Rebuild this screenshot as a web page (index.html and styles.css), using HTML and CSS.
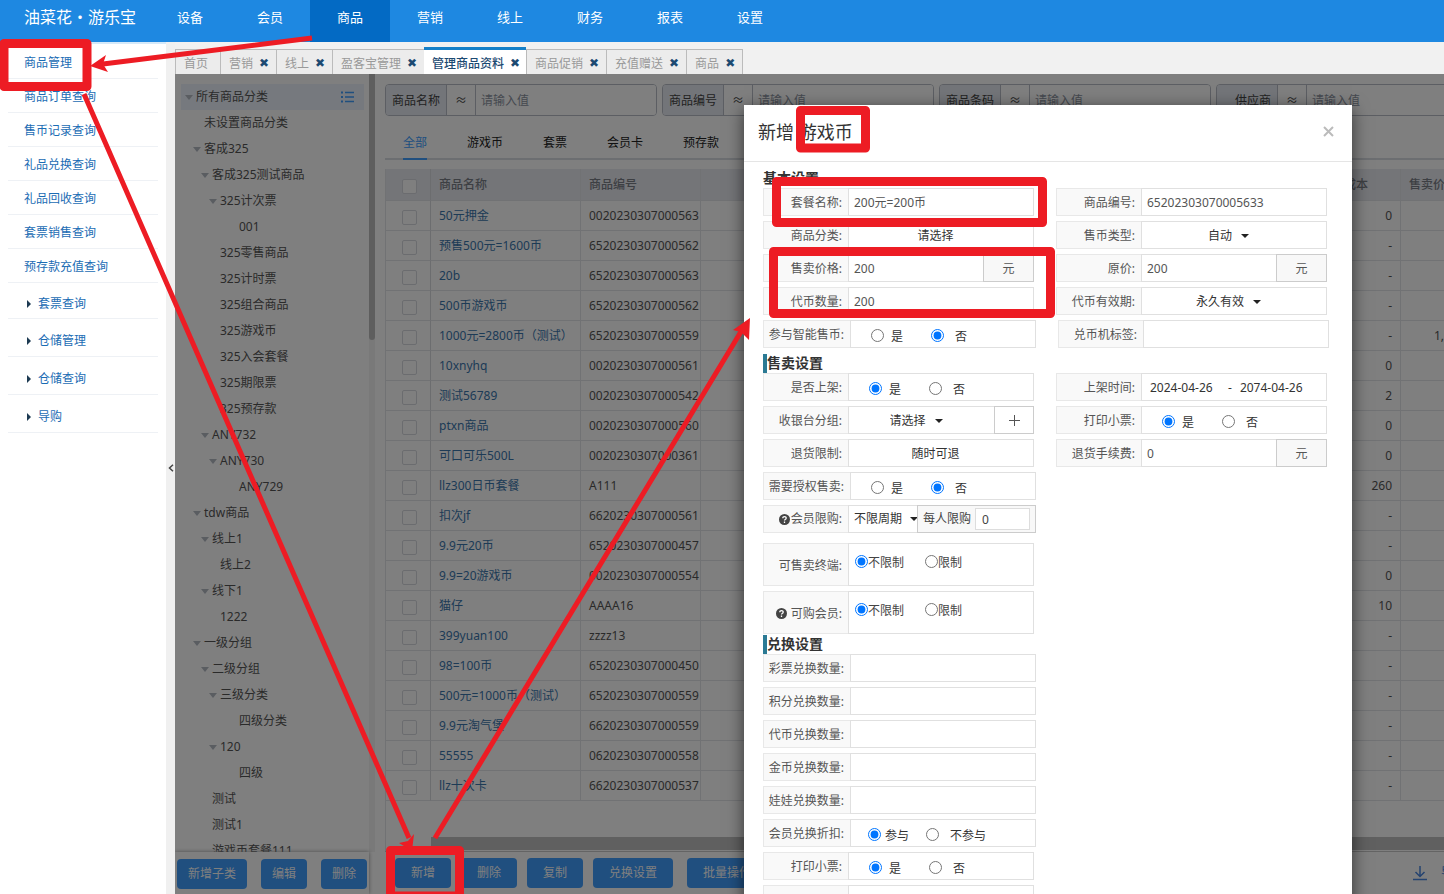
FILE: index.html
```html
<!DOCTYPE html>
<html lang="zh-CN">
<head>
<meta charset="utf-8">
<title>管理商品资料</title>
<link rel="stylesheet" href="styles.css">
</head>
<body>
<header class="topbar">
  <div class="logo">油菜花・游乐宝</div>
  <nav class="topnav">
    <a href="#">设备</a><a href="#">会员</a><a href="#" class="active">商品</a><a href="#">营销</a><a href="#">线上</a><a href="#">财务</a><a href="#">报表</a><a href="#">设置</a>
  </nav>
</header>
<div class="page">
  <aside class="sidebar">
    <a href="#">商品管理</a>
    <a href="#">商品订单查询</a>
    <a href="#">售币记录查询</a>
    <a href="#">礼品兑换查询</a>
    <a href="#">礼品回收查询</a>
    <a href="#">套票销售查询</a>
    <a href="#">预存款充值查询</a>
    <a href="#" class="group first">套票查询</a>
    <a href="#" class="group">仓储管理</a>
    <a href="#" class="group">仓储查询</a>
    <a href="#" class="group">导购</a>
  </aside>
  <button class="collapse" aria-label="收起菜单"><svg width="6" height="8" viewBox="0 0 6 8"><path d="M5 .8 1.5 4 5 7.2" fill="none" stroke="#444" stroke-width="1.5"/></svg></button>
  <main class="workspace">
    <div class="tabs">
      <a href="#" class="home">首页</a>
      <a href="#">营销<b>✖</b></a>
      <a href="#">线上<b>✖</b></a>
      <a href="#">盈客宝管理<b>✖</b></a>
      <a href="#" class="active">管理商品资料<b>✖</b></a>
      <a href="#">商品促销<b>✖</b></a>
      <a href="#">充值赠送<b>✖</b></a>
      <a href="#" class="last">商品<b>✖</b></a>
    </div>
    <div class="frame">
      <section class="category">
        <div class="tree-wrap">
          <ul class="tree">
            <li class="l0 open root">所有商品分类<svg width="14" height="12" viewBox="0 0 14 12"><path d="M4 1.5h9M4 6h9M4 10.500h9" stroke="#409eff" stroke-width="1.500"/><path d="M0 1.500h2M0 6h2M0 10.500h2" stroke="#409eff" stroke-width="2"/></svg></li>
            <li class="l1">未设置商品分类</li>
            <li class="l1 open">客成325</li>
            <li class="l2 open">客成325测试商品</li>
            <li class="l3 open">325计次票</li>
            <li class="l4">001</li>
            <li class="l3">325零售商品</li>
            <li class="l3">325计时票</li>
            <li class="l3">325组合商品</li>
            <li class="l3">325游戏币</li>
            <li class="l3">325入会套餐</li>
            <li class="l3">325期限票</li>
            <li class="l3">325预存款</li>
            <li class="l2 open">ANY732</li>
            <li class="l3 open">ANY730</li>
            <li class="l4">ANY729</li>
            <li class="l1 open">tdw商品</li>
            <li class="l2 open">线上1</li>
            <li class="l3">线上2</li>
            <li class="l2 open">线下1</li>
            <li class="l3">1222</li>
            <li class="l1 open">一级分组</li>
            <li class="l2 open">二级分组</li>
            <li class="l3 open">三级分类</li>
            <li class="l4">四级分类</li>
            <li class="l3 open">120</li>
            <li class="l4">四级</li>
            <li class="l2">测试</li>
            <li class="l2">测试1</li>
            <li class="l2">游戏币套餐111</li>
          </ul>
          <div class="track"><div class="thumb"></div></div>
        </div>
        <div class="category-actions">
          <button class="btn">新增子类</button><button class="btn">编辑</button><button class="btn">删除</button>
        </div>
      </section>
      <section class="goods">
        <div class="filters">
          <div class="filter"><label for="f1">商品名称</label><span>≈</span><input id="f1" placeholder="请输入值"></div>
          <div class="filter"><label for="f2">商品编号</label><span>≈</span><input id="f2" placeholder="请输入值"></div>
          <div class="filter"><label for="f3">商品条码</label><span>≈</span><input id="f3" placeholder="请输入值"></div>
          <div class="filter"><label for="f4">供应商</label><span>≈</span><input id="f4" placeholder="请输入值"></div>
        </div>
        <nav class="types"><a href="#" class="active">全部</a><a href="#">游戏币</a><a href="#">套票</a><a href="#">会员卡</a><a href="#">预存款</a></nav>
        <div class="grid-wrap">
          <table class="grid">
            <colgroup><col class="c-check"><col class="c-name"><col class="c-code"><col><col class="c-cost"><col class="c-price"></colgroup>
            <thead><tr><th class="pick"><input type="checkbox" aria-label="全选"></th><th>商品名称</th><th>商品编号</th><th></th><th class="cost">成本</th><th>售卖价格</th></tr></thead>
            <tbody>
              <tr><td class="pick"><input type="checkbox" aria-label="选择"></td><td><a href="#">50元押金</a></td><td>0020230307000563</td><td></td><td class="num">0</td><td></td></tr>
              <tr><td class="pick"><input type="checkbox" aria-label="选择"></td><td><a href="#">预售500元=1600币</a></td><td>6520230307000562</td><td></td><td class="num">-</td><td></td></tr>
              <tr><td class="pick"><input type="checkbox" aria-label="选择"></td><td><a href="#">20b</a></td><td>6520230307000563</td><td></td><td class="num">-</td><td></td></tr>
              <tr><td class="pick"><input type="checkbox" aria-label="选择"></td><td><a href="#">500币游戏币</a></td><td>6520230307000562</td><td></td><td class="num">-</td><td></td></tr>
              <tr><td class="pick"><input type="checkbox" aria-label="选择"></td><td><a href="#">1000元=2800币（测试）</a></td><td>6520230307000559</td><td></td><td class="num">-</td><td class="num">1,</td></tr>
              <tr><td class="pick"><input type="checkbox" aria-label="选择"></td><td><a href="#">10xnyhq</a></td><td>0020230307000561</td><td></td><td class="num">0</td><td></td></tr>
              <tr><td class="pick"><input type="checkbox" aria-label="选择"></td><td><a href="#">测试56789</a></td><td>0020230307000542</td><td></td><td class="num">2</td><td></td></tr>
              <tr><td class="pick"><input type="checkbox" aria-label="选择"></td><td><a href="#">ptxn商品</a></td><td>0020230307000560</td><td></td><td class="num">0</td><td></td></tr>
              <tr><td class="pick"><input type="checkbox" aria-label="选择"></td><td><a href="#">可口可乐500L</a></td><td>0020230307000361</td><td></td><td class="num">0</td><td></td></tr>
              <tr><td class="pick"><input type="checkbox" aria-label="选择"></td><td><a href="#">llz300日币套餐</a></td><td>A111</td><td></td><td class="num">260</td><td></td></tr>
              <tr><td class="pick"><input type="checkbox" aria-label="选择"></td><td><a href="#">扣次jf</a></td><td>6620230307000561</td><td></td><td class="num">-</td><td></td></tr>
              <tr><td class="pick"><input type="checkbox" aria-label="选择"></td><td><a href="#">9.9元20币</a></td><td>6520230307000457</td><td></td><td class="num">-</td><td></td></tr>
              <tr><td class="pick"><input type="checkbox" aria-label="选择"></td><td><a href="#">9.9=20游戏币</a></td><td>0020230307000554</td><td></td><td class="num">0</td><td></td></tr>
              <tr><td class="pick"><input type="checkbox" aria-label="选择"></td><td><a href="#">猫仔</a></td><td>AAAA16</td><td></td><td class="num">10</td><td></td></tr>
              <tr><td class="pick"><input type="checkbox" aria-label="选择"></td><td><a href="#">399yuan100</a></td><td>zzzz13</td><td></td><td class="num">-</td><td></td></tr>
              <tr><td class="pick"><input type="checkbox" aria-label="选择"></td><td><a href="#">98=100币</a></td><td>6520230307000450</td><td></td><td class="num">-</td><td></td></tr>
              <tr><td class="pick"><input type="checkbox" aria-label="选择"></td><td><a href="#">500元=1000币（测试）</a></td><td>6520230307000559</td><td></td><td class="num">-</td><td></td></tr>
              <tr><td class="pick"><input type="checkbox" aria-label="选择"></td><td><a href="#">9.9元淘气堡</a></td><td>6620230307000559</td><td></td><td class="num">-</td><td></td></tr>
              <tr><td class="pick"><input type="checkbox" aria-label="选择"></td><td><a href="#">55555</a></td><td>0620230307000558</td><td></td><td class="num">-</td><td></td></tr>
              <tr><td class="pick"><input type="checkbox" aria-label="选择"></td><td><a href="#">llz十次卡</a></td><td>6620230307000537</td><td></td><td class="num">-</td><td></td></tr>
            </tbody>
          </table>
          <div class="hscroll"></div>
        </div>
        <div class="goods-actions">
          <button class="btn">新增</button><button class="btn">删除</button><button class="btn">复制</button><button class="btn">兑换设置</button><button class="btn batch">批量操作</button>
          <a href="#" class="export"><svg width="14" height="16" viewBox="0 0 14 16"><path d="M7 1v10M2.500 7 7 11.500 11.500 7M0 14.500h14" fill="none" stroke="#4a86e0" stroke-width="1.500"/></svg>导</a>
        </div>
      </section>
      <div class="overlay">
        <form class="modal">
          <div class="modal-head"><h1>新增 游戏币</h1><button type="button" class="close" aria-label="关闭"><svg width="11" height="11" viewBox="0 0 11 11"><path d="M1 1l9 9M10 1l-9 9" stroke="#bbb" stroke-width="2"/></svg></button></div>
          <div class="modal-body">
            <h2 class="plain">基本设置</h2>
            <div class="row">
              <div class="field"><label for="m1">套餐名称:</label><input id="m1" value="200元=200币"></div>
              <div class="field"><label for="m2">商品编号:</label><input id="m2" value="65202303070005633"></div>
            </div>
            <div class="row">
              <div class="field"><span class="cap">商品分类:</span><button type="button" class="box center">请选择</button></div>
              <div class="field"><label for="m3">售币类型:</label><div class="box center"><select id="m3"><option>自动</option></select><i class="caret"></i></div></div>
            </div>
            <div class="row">
              <div class="field"><label for="m4">售卖价格:</label><input id="m4" value="200"><span class="unit">元</span></div>
              <div class="field"><label for="m5">原价:</label><input id="m5" value="200"><span class="unit">元</span></div>
            </div>
            <div class="row">
              <div class="field"><label for="m6">代币数量:</label><input id="m6" value="200"></div>
              <div class="field"><label for="m7">代币有效期:</label><div class="box center"><select id="m7"><option>永久有效</option></select><i class="caret"></i></div></div>
            </div>
            <div class="row">
              <div class="field long"><span class="cap">参与智能售币:</span><div class="box radios"><label><input type="radio" name="r1">是</label><label><input type="radio" name="r1" checked>否</label></div></div>
              <div class="field"><label for="m8">兑币机标签:</label><input id="m8"></div>
            </div>
            <h2>售卖设置</h2>
            <div class="row">
              <div class="field"><span class="cap">是否上架:</span><div class="box radios"><label><input type="radio" name="r2" checked>是</label><label><input type="radio" name="r2">否</label></div></div>
              <div class="field"><label for="m9">上架时间:</label><div class="box dates"><input id="m9" value="2024-04-26"><span>-</span><input aria-label="结束时间" value="2074-04-26"></div></div>
            </div>
            <div class="row">
              <div class="field"><label for="m10">收银台分组:</label><div class="box center"><select id="m10"><option>请选择</option></select><i class="caret"></i></div><button type="button" class="plus" aria-label="添加"><svg width="11" height="11" viewBox="0 0 11 11"><path d="M5.500 0v11M0 5.500h11" stroke="#555"/></svg></button></div>
              <div class="field"><span class="cap">打印小票:</span><div class="box radios"><label><input type="radio" name="r3" checked>是</label><label><input type="radio" name="r3">否</label></div></div>
            </div>
            <div class="row">
              <div class="field"><span class="cap">退货限制:</span><button type="button" class="box center">随时可退</button></div>
              <div class="field"><label for="m11">退货手续费:</label><input id="m11" value="0"><span class="unit">元</span></div>
            </div>
            <div class="row">
              <div class="field long"><span class="cap">需要授权售卖:</span><div class="box radios"><label><input type="radio" name="r4">是</label><label><input type="radio" name="r4" checked>否</label></div></div>
            </div>
            <div class="row">
              <div class="field long"><label for="m12" class="cap short"><svg class="help" width="11" height="11" viewBox="0 0 11 11"><circle cx="5.500" cy="5.500" r="5.500" fill="#444"/><path d="M3.800 4.300q0-1.700 1.700-1.700t1.700 1.500q0 .9-1 1.400-.7.400-.7 1.100M5.500 7.600v1.300" fill="none" stroke="#fff" stroke-width="1.300"/></svg>会员限购:</label><div class="box period"><select id="m12"><option>不限周期</option></select><i class="caret"></i></div><div class="each"><label for="m13">每人限购</label><input id="m13" value="0"></div></div>
            </div>
            <div class="row tall gap">
              <div class="field"><span class="cap">可售卖终端:</span><div class="box limits"><label><input type="radio" name="r5" checked>不限制</label><label><input type="radio" name="r5">限制</label></div></div>
            </div>
            <div class="row tall">
              <div class="field"><span class="cap"><svg class="help spaced" width="11" height="11" viewBox="0 0 11 11"><circle cx="5.500" cy="5.500" r="5.500" fill="#444"/><path d="M3.800 4.300q0-1.700 1.700-1.700t1.700 1.500q0 .9-1 1.400-.7.400-.7 1.100M5.500 7.600v1.300" fill="none" stroke="#fff" stroke-width="1.300"/></svg>可购会员:</span><div class="box limits"><label><input type="radio" name="r6" checked>不限制</label><label><input type="radio" name="r6">限制</label></div></div>
            </div>
            <h2 class="tight">兑换设置</h2>
            <div class="row"><div class="field long"><label for="m14">彩票兑换数量:</label><input id="m14"></div></div>
            <div class="row"><div class="field long"><label for="m15">积分兑换数量:</label><input id="m15"></div></div>
            <div class="row"><div class="field long"><label for="m16">代币兑换数量:</label><input id="m16"></div></div>
            <div class="row"><div class="field long"><label for="m17">金币兑换数量:</label><input id="m17"></div></div>
            <div class="row"><div class="field long"><label for="m18">娃娃兑换数量:</label><input id="m18"></div></div>
            <div class="row"><div class="field long"><span class="cap">会员兑换折扣:</span><div class="box radios wide"><label><input type="radio" name="r7" checked>参与</label><label><input type="radio" name="r7">不参与</label></div></div></div>
            <div class="row"><div class="field"><span class="cap">打印小票:</span><div class="box radios"><label><input type="radio" name="r8" checked>是</label><label><input type="radio" name="r8">否</label></div></div></div>
            <div class="row"><div class="field"><span class="cap"></span><div class="box"></div></div></div>
          </div>
        </form>
      </div>
    </div>
  </main>
</div>
<svg class="marks" width="1444" height="894" viewBox="0 0 1444 894" aria-hidden="true">
  <g fill="none" stroke="#ed1c24" stroke-width="9" stroke-linejoin="round">
    <rect x="4" y="43.500" width="83" height="43"/>
    <rect x="800.500" y="110.500" width="65" height="37.500"/>
    <rect x="776.500" y="181.500" width="266" height="41"/>
    <rect x="773.500" y="251.500" width="277" height="62"/>
    <rect x="390.500" y="850.500" width="69" height="45.500"/>
  </g>
  <g stroke="#ed1c24" stroke-width="5" stroke-linecap="butt">
    <path d="M312 38 103 64M84 94 409 838M435 838 742 330"/>
  </g>
  <g fill="#ed1c24">
    <path d="M90 66 106 55 103 64 108 72z"/>
    <path d="M412 851 399 843 408 841 414 834z"/>
    <path d="M750 318 733 330 741 332 749 340z"/>
  </g>
</svg>
</body>
</html>
```
FILE: styles.css
```css
* { box-sizing: border-box; }
body {
  margin: 0;
  height: 100vh;
  display: flex;
  flex-direction: column;
  overflow: hidden;
  position: relative;
  background: #fff;
  color: #444;
  font: 12px/18px "Noto Sans", "Noto Sans CJK SC", sans-serif;
}
a { color: inherit; text-decoration: none; }
button, input, select { font: inherit; color: inherit; margin: 0; }
svg { display: block; flex: none; }

.topbar { display: flex; height: 42px; flex: none; background: #1e88e1; color: #fff; }
.logo { width: 150px; padding-left: 24px; font-size: 16px; line-height: 34px; white-space: nowrap; }
.topnav { display: flex; }
.topnav a { width: 80px; text-align: center; font-size: 13px; line-height: 34px; }
.topnav a.active { background: #036ac4; }

.page { flex: 1; min-height: 0; display: flex; }
.sidebar { width: 166px; flex: none; padding: 1px 8px 0; border-top: 2px solid #d5e9f9; color: #1b6cb4; }
.sidebar a { display: flex; align-items: center; height: 34px; padding: 2px 0 0 16px; border-bottom: 1px solid #eef1f5; }
.sidebar a.group { height: 38px; padding: 6px 0 0 19px; gap: 7px; }
.sidebar a.first { height: 36px; }
.sidebar a.group::before { content: ""; border: 4px solid transparent; border-left-color: #1d3a52; border-right: 0; }
.collapse { width: 9px; flex: none; padding: 0; border: 0; background: #f0f0f0; display: flex; align-items: center; justify-content: center; }

.workspace { flex: 1; min-width: 0; display: flex; flex-direction: column; }
.tabs { height: 32px; flex: none; display: flex; align-items: flex-end; background: #f1f1f1; color: #999; }
.tabs a { height: 25px; display: flex; gap: 6px; padding: 0 8px; line-height: 27px; border: 1px solid #bbb; border-width: 1px 0 0 1px; background: #ececec; }
.tabs a.home { padding-right: 12px; }
.tabs a.last { border-right-width: 1px; }
.tabs a.active { height: 27px; padding: 0 7px 0 8px; border: 0; border-top: 3px solid #1580c8; background: #fff; color: #1c4a72; line-height: 27px; font-weight: 500; }
.tabs b { width: 9px; color: #1c4a72; font: 12px/26px "DejaVu Sans", sans-serif; }

.frame { flex: 1; min-height: 0; display: flex; position: relative; overflow: hidden; }
.category { width: 200px; flex: none; display: flex; flex-direction: column; color: #555; }
.tree-wrap { flex: 1; min-height: 0; display: flex; overflow: hidden; }
.tree { flex: 1; margin: 0; padding: 10px 5px 0 6px; list-style: none; }
.tree li { display: flex; align-items: center; height: 26px; white-space: nowrap; }
.tree li.open::before { content: ""; margin: 0 3px 0 -11px; border: 4px solid transparent; border-top: 5px solid #b4bac3; border-bottom: 0; }
.tree .l0 { padding-left: 15px; }
.tree .l1 { padding-left: 23px; }
.tree .l2 { padding-left: 31px; }
.tree .l3 { padding-left: 39px; }
.tree .l4 { padding-left: 58px; }
.tree .root { background: #edf3fc; padding-right: 9px; }
.tree .root svg { margin-left: auto; }
.track { width: 6px; background: #f2f2f2; }
.thumb { height: 266px; background: #bdbdbd; border-radius: 0 0 3px 3px; }
.category-actions { height: 42px; flex: none; display: flex; gap: 14px; padding: 7px 2px; margin-right: 6px; box-shadow: 0 0 4px #999; }
.btn { height: 30px; padding: 0 11px; border: 0; border-radius: 4px; background: #409eff; color: #fff; white-space: nowrap; }

.goods { flex: 1; min-width: 0; display: flex; flex-direction: column; padding: 10px 0 0 10px; }
.filters { display: flex; gap: 5px; }
.filter { width: 272px; flex: none; height: 32px; display: flex; border: 1px solid #b8bdc6; border-radius: 4px; overflow: hidden; line-height: 32px; }
.filter label { width: 61px; padding-right: 6px; text-align: right; background: #e6eaf2; border-right: 1px solid #b8bdc6; }
.filter span { width: 29px; text-align: center; border-right: 1px solid #b8bdc6; }
.filter input { flex: 1; min-width: 0; border: 0; padding: 2px 5px 0; background: #fff; }
.filter input::placeholder { color: #8c93a0; }
.types { display: flex; gap: 40px; margin-top: 12px; padding-left: 18px; height: 32px; border-bottom: 2px solid #d9dce3; color: #222; line-height: 30px; }
.types a { height: 32px; }
.types a.active { color: #409eff; border-bottom: 2px solid #409eff; }
.grid-wrap { flex: 1; min-height: 0; margin-top: 9px; display: flex; flex-direction: column; border-left: 1px solid #e2e4e9; }
.grid { width: 100%; table-layout: fixed; border-collapse: separate; border-spacing: 0; color: #555; }
.c-check { width: 45px; }
.c-name { width: 150px; }
.c-code { width: 120px; }
.c-cost { width: 120px; }
.c-price { width: 43px; }
.grid th, .grid td { height: 30px; padding: 0 0 0 8px; text-align: left; font-weight: 400; white-space: nowrap; overflow: hidden; border: 0 solid #e3e5e9; border-bottom-width: 1px; border-right-width: 1px; }
.grid th { height: 32px; background: #e8eaf1; color: #7a7e87; font-weight: 500; }
.grid th:nth-child(4), .grid td:nth-child(4) { border-right-width: 0; }
.grid th:last-child, .grid td:last-child { border-right-width: 0; }
.grid .cost { text-align: right; padding-right: 32px; }
.grid .num { text-align: right; padding-right: 8px; }
.grid .num:last-child { padding: 0; }
.grid a { color: #3a76ad; }
.grid .pick { padding: 3px 0 0 16px; border-right-color: #d8dadf; }
.pick input { display: block; appearance: none; width: 15px; height: 15px; border: 1px solid #d6d9df; border-radius: 2px; background: #fff; }
.hscroll { height: 13px; flex: none; margin: auto 0 1px 45px; background: #c0c0c0; }
.goods-actions { height: 43px; flex: none; display: flex; align-items: flex-start; gap: 10px; padding: 6px 0 0 10px; border-top: 1px solid #c8c8c8; }
.goods-actions .btn { padding: 0 16px; }
.goods-actions .batch { margin-left: 4px; }
.export { margin-left: auto; display: flex; align-items: center; gap: 14px; width: 31px; height: 30px; overflow: hidden; color: #4a86e0; }

.overlay { position: absolute; inset: 0; overflow: hidden; background: rgba(0, 0, 0, .5); display: flex; justify-content: flex-end; align-items: flex-start; padding: 31px 92px 0 0; }
.modal { width: 608px; background: #fff; box-shadow: 0 4px 16px rgba(0, 0, 0, .6); }
.modal-head { display: flex; align-items: center; justify-content: space-between; height: 57px; padding: 0 18px 4px 14px; border-bottom: 1px solid #e5e5e5; }
.modal h1 { margin: 0; padding-top: 2px; font-size: 18px; font-weight: 400; line-height: 26px; color: #333; }
.close { border: 0; padding: 0; background: none; }
.modal-body { display: flex; flex-direction: column; gap: 5px; padding: 6px 19px 20px; }
.modal h2 { margin: 0 0 -5px; height: 20px; font-size: 14px; line-height: 18px; font-weight: 700; color: #333; display: flex; align-items: center; }
.modal h2::before { content: ""; width: 4px; height: 19px; background: #2b7a94; }
.modal h2.plain::before { display: none; }
.modal h2.tight { margin-top: -5px; }
.row { display: flex; gap: 22px; height: 28px; }
.row.tall { height: 43px; }
.row.gap { margin-top: 5px; }
.field { width: 271px; display: flex; }
.field.long { width: 273px; }
.field > label, .cap { width: 85px; flex: none; display: flex; align-items: center; justify-content: flex-end; padding: 2px 6px 0 0; background: #f9f9f9; border: 1px solid #e8e8e8; border-right: 0; white-space: nowrap; color: #555; }
.long > label, .long > .cap { width: 87px; }
.long > .short { width: 85px; padding-top: 0; }
.field > input, .box { flex: 1; min-width: 0; border: 1px solid #e0e0e0; border-radius: 0; padding: 2px 5px 0; background: #fff; }
.field > input { color: #555; }
.box { display: flex; align-items: center; color: #333; }
.field > .center { justify-content: center; gap: 8px; padding: 1px 11px 0 0; }
.box select { appearance: none; border: 0; padding: 0; background: none; }
.caret { border: 4px solid transparent; border-top-color: #222; border-bottom: 0; }
.unit, .plus { display: flex; align-items: center; justify-content: center; border: 1px solid #ccc; margin-left: -1px; }
.unit { width: 51px; padding-top: 2px; background: #f8f8f8; color: #555; }
.plus { width: 40px; padding: 0; background: #fff; }
.field > .radios { padding: 6px 0 0 20px; }
.radios label { width: 60px; display: flex; align-items: center; gap: 7px; white-space: nowrap; }
.radios label + label { gap: 11px; }
.field > .wide { padding-left: 17px; }
.radios.wide label { width: 58px; gap: 4px; }
.radios.wide label + label { gap: 11px; }
.radios input, .limits input { width: 13px; height: 13px; flex: none; margin: -3px 0 0; }
.field > .limits { align-items: flex-start; padding: 10px 0 0 6px; }
.limits label { width: 70px; display: flex; align-items: center; white-space: nowrap; color: #444; }
.field > .dates { padding: 1px 8px 0; gap: 8px; }
.dates input { width: 70px; border: 0; padding: 0; }
.help { margin-right: 1px; }
.help.spaced { margin-right: 4px; }
.field > .period { width: 69px; flex: none; gap: 7px; padding: 0 0 0 5px; border-right: 0; }
.each { flex: 1; display: flex; align-items: center; gap: 4px; padding: 0 5px; border: 1px solid #ccc; background: #f8f8f8; white-space: nowrap; }
.each input { flex: 1; width: 20px; min-width: 0; height: 22px; padding: 0 6px; border: 1px solid #ddd; background: #fff; }

.marks { position: absolute; left: 0; top: 0; pointer-events: none; }
```
